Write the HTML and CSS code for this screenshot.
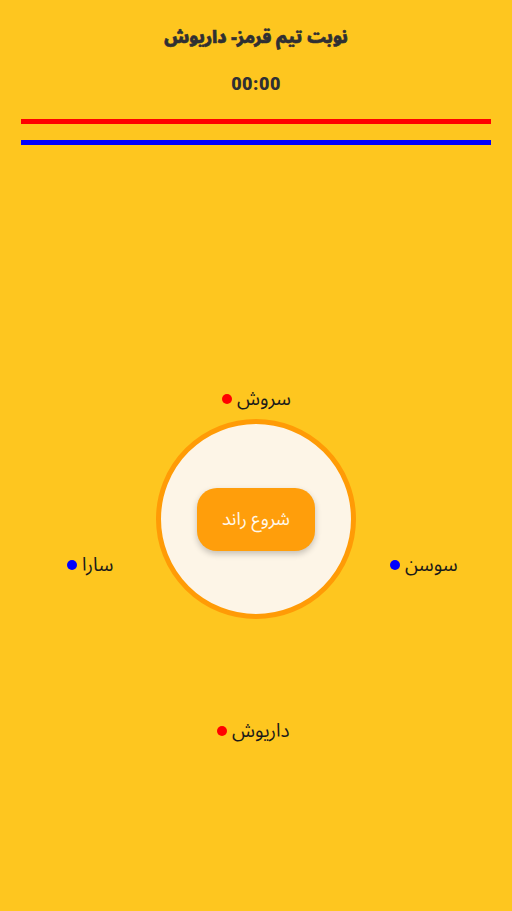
FILE: index.html
```html
<!DOCTYPE html>
<html lang="fa" dir="rtl">
<head>
<meta charset="utf-8">
<link rel="stylesheet" href="styles.css">
</head>
<body>
<div class="screen">
  <header class="header">
    <h1 class="title">نوبت تیم قرمز- داریوش</h1>
    <div class="timer">00:00</div>
  </header>
  <div class="lines">
    <div class="line red"></div>
    <div class="line blue"></div>
  </div>
  <div class="table">
    <div class="player p-top"><span class="name">سروش</span><span class="dot dot-red"></span></div>
    <div class="player p-left"><span class="name">سارا</span><span class="dot dot-blue"></span></div>
    <div class="player p-right"><span class="name">سوسن</span><span class="dot dot-blue"></span></div>
    <div class="player p-bottom"><span class="name">داریوش</span><span class="dot dot-red"></span></div>
    <div class="circle">
      <button class="start">شروع راند</button>
    </div>
  </div>
</div>
</body>
</html>
```
FILE: styles.css
```css
html, body {
  margin: 0;
  padding: 0;
}
body {
  background: #fec61f;
  font-family: "Noto Sans Arabic", "DejaVu Sans", "Noto Sans", sans-serif;
}
.screen {
  width: 512px;
  height: 911px;
  display: flex;
  flex-direction: column;
}
.header {
  display: flex;
  flex-direction: column;
  align-items: center;
  padding-top: 24px;
}
.title {
  margin: 0;
  font-size: 17px;
  font-weight: 900;
  color: #2f2f33;
  line-height: 28px;
  -webkit-text-stroke: 0.6px #2f2f33;
}
.timer {
  margin-top: 21px;
  font-family: "Roboto", sans-serif;
  font-weight: 900;
  font-size: 18px;
  color: #2f2f33;
  line-height: 22px;
  letter-spacing: 0.5px;
}
.lines {
  display: flex;
  flex-direction: column;
  gap: 16px;
  padding: 24px 21px 0 21px;
}
.line {
  height: 5px;
}
.red { background: #ff0000; }
.blue { background: #0000ff; }
.table {
  position: relative;
  flex: 1;
}
.player {
  position: absolute;
  display: flex;
  align-items: center;
  gap: 5px;
  font-size: 19px;
  color: #1a1a1a;
  line-height: 28px;
}
.dot {
  width: 10px;
  height: 10px;
  border-radius: 50%;
}
.dot-red { background: #ff0000; }
.dot-blue { background: #0000ff; }
.p-top { top: 240px; left: 222px; }
.p-left { top: 406px; left: 67px; }
.p-right { top: 406px; left: 390px; }
.p-bottom { top: 572px; left: 217px; }
.circle {
  position: absolute;
  left: 156px;
  top: 274px;
  width: 190px;
  height: 190px;
  border: 5px solid #ff9b06;
  border-radius: 50%;
  background: #fdf5e7;
  display: flex;
  align-items: center;
  justify-content: center;
}
.start {
  width: 118px;
  height: 63px;
  border: none;
  border-radius: 20px;
  background: #ff9e0b;
  color: #fff8ea;
  font-family: inherit;
  font-size: 18px;
  box-shadow: 0 3px 6px rgba(0,0,0,0.22);
}
```
